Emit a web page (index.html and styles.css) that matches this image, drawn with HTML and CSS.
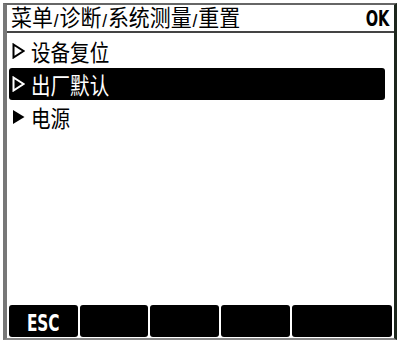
FILE: index.html
```html
<!DOCTYPE html>
<html lang="zh-CN">
<head>
    <meta charset="UTF-8">
    <title>重置</title>
    <link rel="stylesheet" href="styles.css">
</head>
<body>
    <div class="screen">
        <div class="title-bar">
            <span class="path">菜单<b>/</b>诊断<b>/</b>系统测量<b>/</b>重置</span>
            <span class="ok">OK</span>
        </div>

        <ul class="menu">
            <li class="item">
                <svg class="arrow" viewBox="0 0 13 16"><polygon points="1.5,1.5 11.5,8 1.5,14.5" fill="none" stroke="currentColor" stroke-width="2"/></svg>
                <span class="label">设备复位</span>
            </li>
            <li class="item selected">
                <svg class="arrow" viewBox="0 0 13 16"><polygon points="1.5,1.5 11.5,8 1.5,14.5" fill="none" stroke="currentColor" stroke-width="2"/></svg>
                <span class="label">出厂默认</span>
            </li>
            <li class="item">
                <svg class="arrow" viewBox="0 0 13 16"><polygon points="1,1 12.5,8 1,15" fill="currentColor"/></svg>
                <span class="label">电源</span>
            </li>
        </ul>

        <div class="softkeys">
            <div class="key"><span class="key-text">ESC</span></div>
            <div class="key"></div>
            <div class="key"></div>
            <div class="key"></div>
            <div class="key"></div>
        </div>
    </div>
</body>
</html>
```

FILE: styles.css
```css
body {
    margin: 0;
    background-color: white;
    font-family: "Noto Sans CJK SC", "DejaVu Sans", sans-serif;
}

.screen {
    margin: 3px 7px 0 3px;
    height: 333px;
    border-top: 2px solid #666;
    border-left: 4px solid #777;
    border-right: 3px solid #1c261c;
    border-bottom: 2px solid #888;
    display: flex;
    flex-direction: column;
    background-color: white;
}

.title-bar {
    height: 26px;
    border-bottom: 2px solid #444;
    display: flex;
    justify-content: space-between;
    align-items: center;
    padding: 0 5px 0 4px;
}

.path {
    display: inline-block;
    font-size: 23px;
    line-height: 26px;
    padding-top: 1px;
    color: black;
    white-space: nowrap;
    transform: scaleX(0.91);
    transform-origin: left center;
}

.path b {
    font-family: "DejaVu Sans Condensed", "DejaVu Sans", sans-serif;
    font-size: 16px;
    margin: 0 1px;
}

.ok {
    display: inline-block;
    font-family: "DejaVu Sans Condensed", "Liberation Sans", sans-serif;
    font-weight: bold;
    font-size: 18px;
    color: black;
    transform: scale(0.9, 1.15);
    transform-origin: right center;
}

.menu {
    list-style: none;
    margin: 0;
    padding: 2px 0 0 0;
    flex: 1;
}

.item {
    height: 32px;
    margin: 0 9px 1px 2px;
    padding-left: 3px;
    display: flex;
    align-items: center;
    color: black;
}

.item.selected {
    background-color: black;
    color: white;
    border-radius: 3px;
}

.arrow {
    width: 13px;
    height: 16px;
    margin-right: 6px;
    flex-shrink: 0;
}

.label {
    display: inline-block;
    font-size: 23px;
    line-height: 30px;
    white-space: nowrap;
    transform: scaleX(0.85);
    transform-origin: left center;
}

.softkeys {
    display: grid;
    grid-template-columns: 69px 68px 69px 69px 1fr;
    gap: 2px;
    height: 32px;
    margin: 0 2px 1px 2px;
}

.key {
    background-color: black;
    border-radius: 3px;
    color: white;
    display: flex;
    justify-content: center;
    align-items: center;
    padding-top: 3px;
}

.key-text {
    display: inline-block;
    font-family: "DejaVu Sans Condensed", "Liberation Sans", sans-serif;
    font-weight: bold;
    font-size: 20px;
    transform: scale(0.85, 1.15);
}
```
